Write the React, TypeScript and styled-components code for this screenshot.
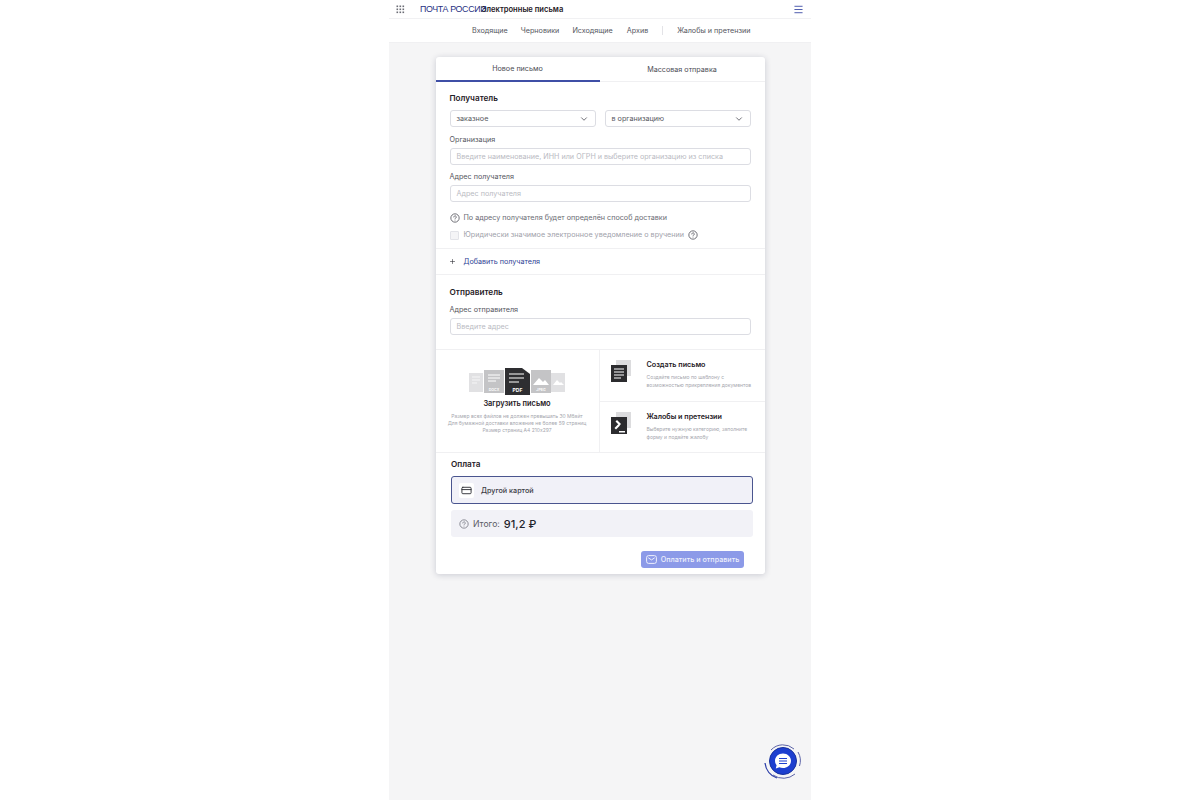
import React from "react";
import styled, { createGlobalStyle } from "styled-components";
import { ChevronDown, CreditCard, Menu, Plus } from "lucide-react";

const Global = createGlobalStyle`
  html, body { margin: 0; background: #fff; }
  body { font-family: Inter, "Noto Sans", sans-serif; color: #2c2d33; }
  * { box-sizing: border-box; }
`;

const Page = styled.div`
  width: 422px;
  height: 800px;
  margin-left: 389px;
  background: #f5f5f6;
  position: relative;
  overflow: hidden;
`;

const TopBar = styled.header`
  height: 19px;
  background: #fff;
  display: flex;
  align-items: center;
  padding: 0 7px;
  border-bottom: 1px solid #f1f1f3;
`;

const Logo = styled.span`
  font-family: "Liberation Sans", sans-serif;
  font-size: 9px;
  letter-spacing: -0.35px;
  color: #1f2f7f;
  margin-left: 15px;
  width: 61px;
  transform: scaleX(0.98);
  transform-origin: left;
  white-space: nowrap;
`;

const AppTitle = styled.span`
  font-size: 7.6px;
  font-weight: 600;
  color: #1f2026;
  flex: 1;
`;

const SubNav = styled.nav`
  height: 24px;
  background: #fff;
  display: flex;
  align-items: center;
  padding-left: 83px;
  font-size: 7.2px;
  color: #55565e;
  border-bottom: 1px solid #f0f0f2;
`;

const NavItem = styled.span<{ $gap: number }>`
  margin-right: ${(p) => p.$gap}px;
  white-space: nowrap;
`;

const NavDivider = styled.span`
  width: 1px;
  height: 9px;
  background: #e3e3e7;
  margin-right: 14px;
`;

const Card = styled.main`
  width: 329px;
  height: 517px;
  margin: 14px 0 0 46.5px;
  background: #fff;
  border-radius: 3px;
  box-shadow: 0 1px 6px rgba(30, 35, 70, 0.2);
  display: flex;
  flex-direction: column;
`;

const Tabs = styled.div`
  display: grid;
  grid-template-columns: 164px 165px;
  height: 25px;
`;

const Tab = styled.div<{ $active?: boolean }>`
  display: flex;
  align-items: center;
  justify-content: center;
  font-size: 7.2px;
  color: #4b4c54;
  border-bottom: ${(p) => (p.$active ? "2px solid #3f4fa6" : "1px solid #f0f0f2")};
`;

const Section = styled.section`
  padding: 0 14px;
`;

const SectionTitle = styled.h3<{ $top: number }>`
  margin: ${(p) => p.$top}px 0 0;
  font-size: 8.2px;
  line-height: 12px;
  font-weight: 600;
  color: #1f2026;
`;

const SelectRow = styled.div`
  display: grid;
  grid-template-columns: 146px 146px;
  gap: 9px;
  margin-top: 6px;
`;

const fieldBase = `
  height: 17px;
  border: 1.5px solid #dcdde3;
  border-radius: 3px;
  background: #fff;
  display: flex;
  align-items: center;
  padding: 0 6px;
  font-size: 7.2px;
`;

const Select = styled.div`
  ${fieldBase}
  justify-content: space-between;
  color: #55565e;
`;

const Label = styled.div<{ $top: number }>`
  margin-top: ${(p) => p.$top}px;
  font-size: 7.2px;
  line-height: 9px;
  color: #55565e;
`;

const Field = styled.div`
  ${fieldBase}
  width: 301px;
  margin-top: 4px;
  color: #b9bac2;
  white-space: nowrap;
`;

const Hint = styled.div<{ $muted?: boolean }>`
  display: flex;
  align-items: center;
  gap: 4px;
  font-size: 7.2px;
  line-height: 10px;
  white-space: nowrap;
  color: ${(p) => (p.$muted ? "#a0a1aa" : "#6a6b74")};
`;

const HintRow = styled(Hint)`
  margin-top: 11px;
`;

const CheckRow = styled(Hint)`
  margin-top: 7px;
`;

const Checkbox = styled.span`
  width: 9px;
  height: 9px;
  border: 1px solid #e2e3e8;
  border-radius: 1px;
  background: #f4f4f6;
  margin-right: 1px;
`;

const AddRow = styled.div`
  height: 27px;
  margin-top: 8px;
  border-top: 1px solid #f0f0f2;
  border-bottom: 1px solid #f0f0f2;
  display: flex;
  align-items: center;
  gap: 8px;
  padding-left: 13px;
  font-size: 7.2px;
  color: #2f3f95;
`;

const Panels = styled.div`
  display: grid;
  grid-template-columns: 164px 165px;
  height: 104px;
  margin-top: 14px;
  border-top: 1px solid #f0f0f2;
  border-bottom: 1px solid #f0f0f2;
`;

const UploadPanel = styled.div`
  border-right: 1px solid #f0f0f2;
  display: flex;
  flex-direction: column;
  align-items: center;
  padding-top: 18px;
`;

const UploadTitle = styled.div`
  margin-top: 4px;
  font-size: 7.4px;
  line-height: 10px;
  font-weight: 600;
  color: #1f2026;
`;

const UploadNote = styled.div`
  margin-top: 4px;
  font-size: 5px;
  line-height: 7.2px;
  color: #a5a6ae;
  text-align: center;
  white-space: nowrap;
`;

const Actions = styled.div`
  display: grid;
  grid-template-rows: 51px 52px;
`;

const Action = styled.div`
  display: flex;
  align-items: flex-start;
  padding: 10px 0 0 10px;
  & + & {
    border-top: 1px solid #f0f0f2;
  }
`;

const ActionText = styled.div`
  margin-left: 15px;
`;

const ActionTitle = styled.div`
  font-size: 7.2px;
  line-height: 10px;
  font-weight: 600;
  color: #1f2026;
`;

const ActionNote = styled.div`
  margin-top: 3px;
  font-size: 5px;
  line-height: 8px;
  color: #a5a6ae;
  white-space: nowrap;
`;

const Payment = styled.section`
  padding: 0 12px 0 15.5px;
`;

const PayTitle = styled.h3`
  margin: 6px 0 0;
  font-size: 8.2px;
  line-height: 11px;
  font-weight: 600;
  color: #1f2026;
`;

const PayCard = styled.div`
  height: 28px;
  margin-top: 6px;
  background: #f1f1f8;
  border: 1.5px solid #4a558f;
  border-radius: 3px;
  display: flex;
  align-items: center;
  padding-left: 7px;
  gap: 7px;
  font-size: 7.2px;
  font-weight: 500;
  color: #3a3b44;
`;

const PayIcon = styled.span`
  width: 15px;
  height: 15px;
  background: #fff;
  border-radius: 2px;
  display: flex;
  align-items: center;
  justify-content: center;
`;

const Total = styled.div`
  height: 27px;
  margin-top: 6px;
  background: #f2f2f7;
  border-radius: 3px;
  display: flex;
  align-items: center;
  padding-left: 8px;
  gap: 4px;
  font-size: 8.6px;
  color: #5a5b64;
`;

const Amount = styled.span`
  font-size: 11px;
  font-weight: 500;
  color: #23242b;
`;

const Submit = styled.div`
  width: 103px;
  height: 17px;
  margin: 14px 0 0 190px;
  background: #8c9ae8;
  border-radius: 3px;
  display: flex;
  align-items: center;
  justify-content: center;
  gap: 4px;
  font-size: 7.2px;
  font-weight: 500;
  color: #eef0fc;
  white-space: nowrap;
`;

const ChatButton = styled.div`
  position: absolute;
  left: 374px;
  top: 741px;
  width: 40px;
  height: 40px;
`;

const GridIcon = () => (
  <svg width="9" height="9" viewBox="0 0 9 9" fill="#6b6c75">
    {[0.5, 3.5, 6.5].flatMap((y) =>
      [0.5, 3.5, 6.5].map((x) => <rect key={`${x}-${y}`} x={x} y={y} width="1.6" height="1.6" />)
    )}
  </svg>
);

const Question = ({ size = 10, color = "#55565e" }: { size?: number; color?: string }) => (
  <svg width={size} height={size} viewBox="0 0 12 12" fill="none" stroke={color} strokeWidth="1">
    <circle cx="6" cy="6" r="5" />
    <path d="M4.5 4.8a1.5 1.5 0 1 1 2.3 1.3c-.5.3-.8.6-.8 1.1" strokeLinecap="round" />
    <circle cx="6" cy="8.8" r=".5" fill={color} stroke="none" />
  </svg>
);

const MailIcon = () => (
  <svg width="11" height="9" viewBox="0 0 11 9" fill="none" stroke="#eef0fc" strokeWidth="1">
    <rect x=".6" y=".6" width="9.8" height="7.8" rx="2" />
    <path d="M2.6 3l2.9 1.9L8.4 3" strokeLinecap="round" />
  </svg>
);

const FileTypes = () => (
  <svg width="96" height="27" viewBox="0 0 96 27">
    <rect x="0" y="5" width="14" height="19" fill="#e1e1e3" />
    <path d="M3 9h8M3 12h8M3 15h5" stroke="#f6f6f7" strokeWidth="1" />
    <rect x="15" y="2" width="20" height="23" fill="#c4c4c6" />
    <path d="M19 7h12M19 10h12M19 13h8" stroke="#fff" strokeWidth="1" />
    <rect x="62" y="2" width="20" height="23" fill="#c4c4c6" />
    <path d="M64 17l6-7 4 4 2-2 4 5z" fill="#fff" />
    <rect x="82" y="5" width="14" height="19" fill="#e1e1e3" />
    <path d="M84 17l4-5 3 3 1-1 3 3z" fill="#fff" />
    <path d="M36 0h17l8 6v21H36z" fill="#2e2e31" />
    <path d="M40 6h15M40 10h15M40 14h10" stroke="#fff" strokeWidth="1.1" />
    <text x="48.5" y="24" fontSize="5" fontWeight="700" fill="#fff" textAnchor="middle" fontFamily="Inter">PDF</text>
    <text x="25" y="23" fontSize="3.6" fontWeight="600" fill="#fff" textAnchor="middle" fontFamily="Inter">DOCX</text>
    <text x="72" y="23" fontSize="3.6" fontWeight="600" fill="#fff" textAnchor="middle" fontFamily="Inter">JPEG</text>
  </svg>
);

const DocIcon = () => (
  <svg width="22" height="22" viewBox="0 0 22 22">
    <rect x="6" y="0" width="15" height="16" fill="#dcdcde" />
    <rect x="1" y="5" width="16" height="17" fill="#2b2b2e" />
    <path d="M4 9h10M4 12h10M4 15h10M4 18h7" stroke="#fff" strokeWidth="1" />
  </svg>
);

const GavelIcon = () => (
  <svg width="22" height="22" viewBox="0 0 22 22">
    <rect x="6" y="0" width="15" height="16" fill="#dcdcde" />
    <rect x="1" y="5" width="16" height="17" fill="#2b2b2e" />
    <path d="M7 8l4 4-1.5 1.5-4-4zM8.5 12l1.5 1.5-4 4L4.500 16z" fill="#fff" />
    <path d="M9 19h6v1.500H9z" fill="#fff" />
  </svg>
);

const ChatIcon = () => (
  <svg width="40" height="40" viewBox="0 0 40 40" fill="none">
    <path d="M8 9A16.500 16.500 0 0 1 31 8" stroke="#5d64a8" strokeWidth="1" />
    <path d="M35 11a17 17 0 0 1 1.500 14" stroke="#5d64a8" strokeWidth="1" />
    <path d="M2 22a18 18 0 0 0 12 15" stroke="#2d3fa8" strokeWidth="1.300" />
    <path d="M10 34a18 18 0 0 0 22-1" stroke="#5d64a8" strokeWidth="1" />
    <circle cx="20" cy="20" r="13.500" fill="#1d3fcf" stroke="#17309c" strokeWidth="1" />
    <path d="M20 12.500c-4.500 0-8 3.200-8 7.300 0 1.700.6 3.300 1.600 4.500l-.8 3.100 3.500-1.200c1.100.5 2.300.8 3.700.8 4.500 0 8-3.200 8-7.200s-3.500-7.300-8-7.300z" fill="#fff" />
    <path d="M16 17.500h8M16 20h8M16 22.500h8" stroke="#1d3fcf" strokeWidth="1.200" />
  </svg>
);

const App: React.FC = () => (
  <Page>
    <Global />
    <TopBar>
      <GridIcon />
      <Logo>ПОЧТА РОССИИ</Logo>
      <AppTitle>Электронные письма</AppTitle>
      <Menu size={11} color="#3f4fa6" strokeWidth={2} />
    </TopBar>
    <SubNav>
      <NavItem $gap={13}>Входящие</NavItem>
      <NavItem $gap={13}>Черновики</NavItem>
      <NavItem $gap={14}>Исходящие</NavItem>
      <NavItem $gap={14}>Архив</NavItem>
      <NavDivider />
      <NavItem $gap={0}>Жалобы и претензии</NavItem>
    </SubNav>
    <Card>
      <Tabs>
        <Tab $active>Новое письмо</Tab>
        <Tab>Массовая отправка</Tab>
      </Tabs>
      <Section>
        <SectionTitle $top={10}>Получатель</SectionTitle>
        <SelectRow>
          <Select>
            заказное
            <ChevronDown size={10} color="#55565e" />
          </Select>
          <Select>
            в организацию
            <ChevronDown size={10} color="#55565e" />
          </Select>
        </SelectRow>
        <Label $top={8}>Организация</Label>
        <Field>Введите наименование, ИНН или ОГРН и выберите организацию из списка</Field>
        <Label $top={7}>Адрес получателя</Label>
        <Field>Адрес получателя</Field>
        <HintRow>
          <Question />
          По адресу получателя будет определён способ доставки
        </HintRow>
        <CheckRow $muted>
          <Checkbox />
          Юридически значимое электронное уведомление о вручении
          <Question />
        </CheckRow>
      </Section>
      <AddRow>
        <Plus size={7} color="#2c2d33" />
        Добавить получателя
      </AddRow>
      <Section>
        <SectionTitle $top={11}>Отправитель</SectionTitle>
        <Label $top={7}>Адрес отправителя</Label>
        <Field>Введите адрес</Field>
      </Section>
      <Panels>
        <UploadPanel>
          <FileTypes />
          <UploadTitle>Загрузить письмо</UploadTitle>
          <UploadNote>
            Размер всех файлов не должен превышать 30 Мбайт
            <br />
            Для бумажной доставки вложение не более 59 страниц
            <br />
            Размер страниц А4 210х297
          </UploadNote>
        </UploadPanel>
        <Actions>
          <Action>
            <DocIcon />
            <ActionText>
              <ActionTitle>Создать письмо</ActionTitle>
              <ActionNote>
                Создайте письмо по шаблону с
                <br />
                возможностью прикрепления документов
              </ActionNote>
            </ActionText>
          </Action>
          <Action>
            <GavelIcon />
            <ActionText>
              <ActionTitle>Жалобы и претензии</ActionTitle>
              <ActionNote>
                Выберите нужную категорию, заполните
                <br />
                форму и подайте жалобу
              </ActionNote>
            </ActionText>
          </Action>
        </Actions>
      </Panels>
      <Payment>
        <PayTitle>Оплата</PayTitle>
        <PayCard>
          <PayIcon>
            <CreditCard size={11} color="#2c2d33" strokeWidth={2} />
          </PayIcon>
          Другой картой
        </PayCard>
        <Total>
          <Question color="#7a7b84" />
          Итого:
          <Amount>91,2 ₽</Amount>
        </Total>
        <Submit>
          <MailIcon />
          Оплатить и отправить
        </Submit>
      </Payment>
    </Card>
    <ChatButton>
      <ChatIcon />
    </ChatButton>
  </Page>
);

export default App;
